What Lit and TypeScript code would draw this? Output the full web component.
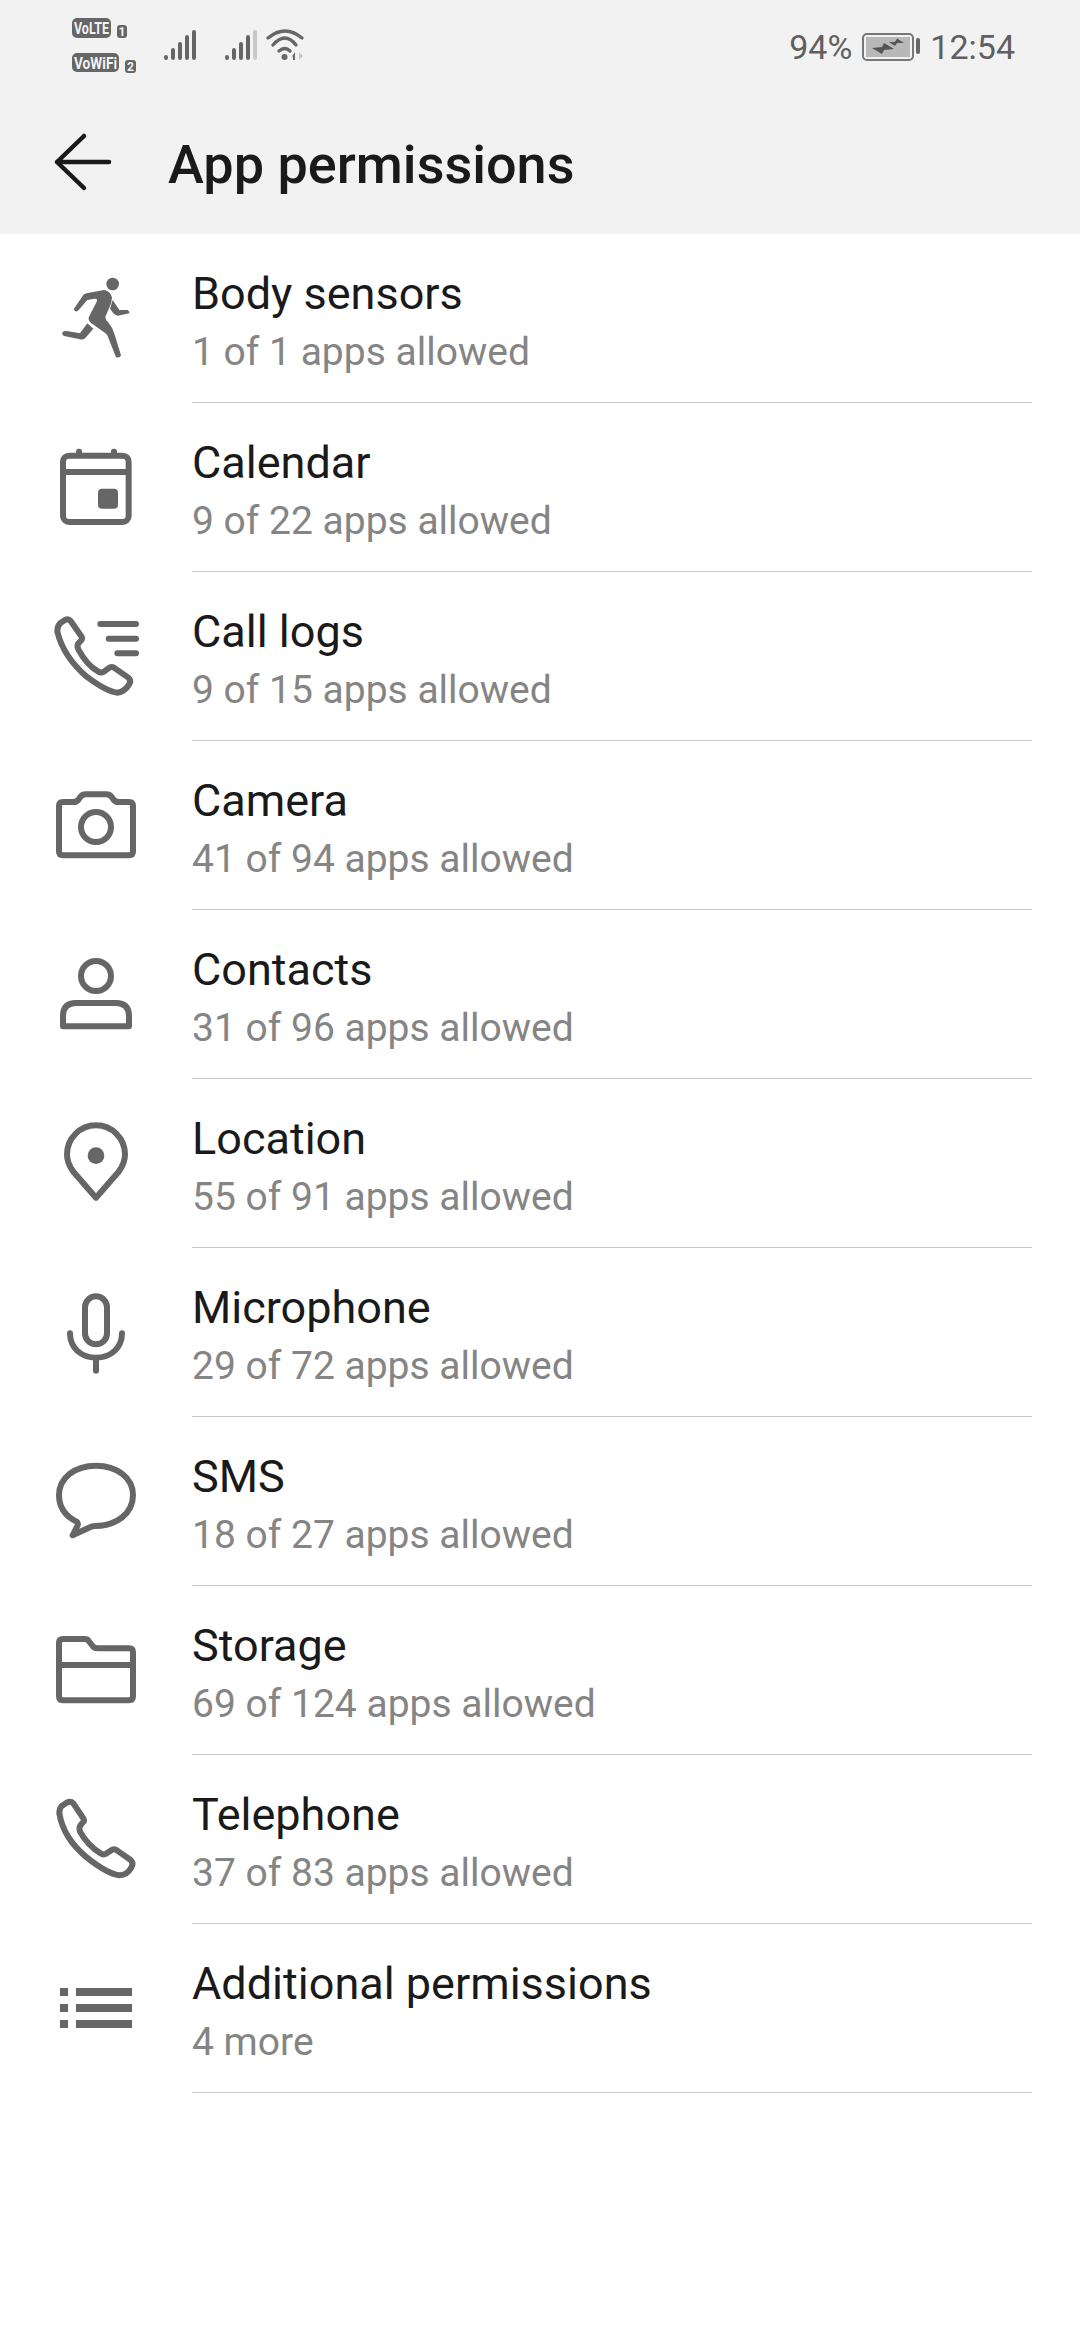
import { LitElement, html, css, svg } from "lit";
import { customElement } from "lit/decorators.js";

const S = "fill:none;stroke:#666;stroke-width:18;stroke-linejoin:round;stroke-linecap:round";

const ICONS: Record<string, { y: number; g: unknown }> = {
  body: {
    y: -48,
    g: svg`<g fill="#666"><circle cx="248" cy="102" r="19"/>
      <path d="M131 178 L160 135 Q164 131 170 130 L222 120 Q240 122 246 142 Q246 160 236 178 L226 200 Q226 210 234 216 Q248 232 254 254 L273 316 Q270 325 258 322 L232 256 Q226 248 216 242 L182 218 Q172 208 178 198 L200 155 Q204 145 194 146 L172 150 L144 182 Q136 188 131 178 Z"/>
      <path d="M248 150 L268 180 L292 180 Q300 184 298 190 L264 197 Q256 197 250 190 L240 176 Z"/>
      <path d="M172 220 L190 236 L166 264 Q160 270 150 268 L102 258 Q94 252 98 246 Q102 242 110 243 L150 250 Z"/></g>`,
  },
  calendar: {
    y: 459,
    g: svg`<rect x="99" y="617" width="197" height="199" rx="18" style=${S}/>
      <g fill="#666"><rect x="99" y="657" width="197" height="18"/>
      <rect x="138" y="596" width="18" height="24" rx="8"/><rect x="243" y="596" width="18" height="24" rx="8"/>
      <rect x="204" y="716" width="60" height="60" rx="12"/></g>`,
  },
  calllogs: {
    y: -54,
    g: svg`<path style=${S} d="M90 100 L105 90 Q115 85 122 93 L155 140 Q158 148 152 153 L145 160 Q140 168 145 178 Q170 225 205 245 Q213 250 222 245 L238 233 Q247 228 255 235 L295 263 Q305 272 298 282 Q285 305 262 308 Q230 305 170 260 Q100 200 82 125 Q82 108 90 100 Z"/>
      <path style=${S} d="M211 102 H318 M236 146 H318 M262 190 H318"/>`,
  },
  camera: {
    y: 453,
    g: svg`<path style=${S} d="M87 648 Q87 636 99 636 H130 Q140 636 146 628 L150 622 Q156 613 168 613 H228 Q240 613 246 622 L250 628 Q256 636 266 636 H297 Q309 636 309 648 V784 Q309 796 297 796 H99 Q87 796 87 784 Z"/>
      <circle cx="198" cy="711" r="45" style=${S}/>`,
  },
  contacts: {
    y: -60,
    g: svg`<circle cx="198" cy="138" r="45" style=${S}/>
      <path style=${S} d="M99 289 V258 Q99 219 138 219 H258 Q297 219 297 258 V289 Z"/>`,
  },
  location: {
    y: -63,
    g: svg`<path style=${S} d="M198 293 L130 215 Q111 190 111 163 A87 87 0 0 1 285 163 Q285 190 266 215 Z"/>
      <circle cx="198" cy="167" r="25" fill="#666"/>`,
  },
  mic: {
    y: 444,
    g: svg`<rect x="165" y="589" width="66" height="144" rx="33" style=${S}/>
      <path style=${S} d="M120 700 C120 745 155 773 198 773 C241 773 276 745 276 700 M198 773 V812"/>`,
  },
  sms: {
    y: -69,
    g: svg`<path style=${S} d="M198 77 C135 77 87 113 87 165 C87 200 105 228 140 245 Q146 250 142 258 L128 286 L180 262 Q186 258 195 258 C260 258 309 220 309 165 C309 113 260 77 198 77 Z"/>`,
  },
  storage: {
    y: -102,
    g: svg`<path style=${S} d="M87 69 Q87 57 99 57 H165 Q172 57 176 63 L188 78 Q193 85 202 85 H297 Q309 85 309 97 V229 Q309 241 297 241 H99 Q87 241 87 229 Z"/>
      <rect x="87" y="126" width="222" height="18" fill="#666"/>`,
  },
  phone: {
    y: -45,
    g: svg`<path style=${S} d="M95 108 L110 98 Q122 92 130 100 L160 145 Q165 153 158 158 L152 165 Q146 172 150 185 Q175 228 212 250 Q220 256 230 250 L245 240 Q254 235 262 242 L302 270 Q312 280 304 292 Q292 315 268 316 Q230 310 170 262 Q100 205 88 130 Q88 115 95 108 Z"/>`,
  },
  more: {
    y: 462,
    g: svg`<g fill="#666"><rect x="90" y="654" width="24" height="24"/><rect x="138" y="654" width="168" height="24"/>
      <rect x="90" y="702" width="24" height="24"/><rect x="138" y="702" width="168" height="24"/>
      <rect x="90" y="750" width="24" height="24"/><rect x="138" y="750" width="168" height="24"/></g>`,
  },
};

const ROWS = [
  ["body", "Body sensors", "1 of 1 apps allowed"],
  ["calendar", "Calendar", "9 of 22 apps allowed"],
  ["calllogs", "Call logs", "9 of 15 apps allowed"],
  ["camera", "Camera", "41 of 94 apps allowed"],
  ["contacts", "Contacts", "31 of 96 apps allowed"],
  ["location", "Location", "55 of 91 apps allowed"],
  ["mic", "Microphone", "29 of 72 apps allowed"],
  ["sms", "SMS", "18 of 27 apps allowed"],
  ["storage", "Storage", "69 of 124 apps allowed"],
  ["phone", "Telephone", "37 of 83 apps allowed"],
  ["more", "Additional permissions", "4 more"],
];

@customElement("app-root")
export class AppRoot extends LitElement {
  static styles = css`
    :host { display: block; width: 1080px; height: 2340px; background: #fff; font-family: Roboto, "Noto Sans", sans-serif; overflow: hidden; }
    .head { background: #f2f2f2; height: 234px; display: flex; flex-direction: column; }
    .status { height: 94px; display: flex; align-items: center; justify-content: space-between; padding: 0 65px 0 70px; }
    .status-right { display: flex; align-items: center; gap: 10px; font-size: 34px; color: #5f5f5f; }
    .title { flex: 1; display: flex; align-items: center; padding-left: 52px; padding-bottom: 4px; gap: 56px; }
    .title h1 { margin: 6px 0 0; font-size: 54px; font-weight: 500; color: #1a1a1a; line-height: 1; }
    .list { padding-right: 48px; }
    .row { display: flex; height: 169px; }
    .icon { width: 192px; flex: none; padding-left: 30px; box-sizing: border-box; }
    .body { flex: 1; border-bottom: 1px solid #c8c8c8; display: flex; flex-direction: column; gap: 10px; padding-top: 35px; box-sizing: border-box; }
    .name { font-size: 45px; line-height: 50px; color: #1a1a1a; }
    .sub { font-size: 39px; line-height: 46px; color: #858585; }
    svg { display: block; }
    .badge { font-family: Roboto, sans-serif; font-weight: 700; fill: #f2f2f2; text-anchor: middle; }
    .b-large { font-size: 17px; }
    .b-small { font-size: 12px; }
  `;

  render() {
    return html`
      <div class="head">
        <div class="status">
          <svg width="240" height="94" viewBox="70 0 240 94">
            <g fill="#666">
              <rect x="72" y="18" width="39" height="20" rx="5"/>
              <rect x="117" y="25" width="10" height="13" rx="3"/>
              <rect x="72" y="53" width="47" height="19" rx="5"/>
              <rect x="125" y="60" width="11" height="13" rx="3"/>
            </g>
            <text class="badge b-large" x="91.5" y="34" textLength="35" lengthAdjust="spacingAndGlyphs">VoLTE</text>
            <text class="badge b-small" x="122" y="36">1</text>
            <text class="badge b-large" x="95.5" y="68.5" textLength="43" lengthAdjust="spacingAndGlyphs">VoWiFi</text>
            <text class="badge b-small" x="130.5" y="71">2</text>
            <g stroke="#666" stroke-width="4" stroke-linecap="round" fill="none">
              <path d="M166 57 v1M173 50 v8M180 44 v14M187 37 v21M194 32 v26"/>
              <path d="M227 57 v1M234 50 v8M241 44 v14M248 37 v21"/>
              <path d="M255 32 v26" stroke="#c8c8c8"/>
              <path d="M268 38 Q285 24 302 38M273 45 Q285 31 296 45M279 51 Q285 46 290 51" stroke-width="3.4"/>
            </g>
            <circle cx="284.5" cy="57" r="3" fill="#666"/>
            <path d="M295 52 V60 H293 V56 L291 58 Z" fill="#666"/>
            <path d="M299 52 L303 56 L299 60 Z" fill="#c8c8c8"/>
          </svg>
          <div class="status-right">
            <span>94%</span>
            <svg width="58" height="28" viewBox="0 0 58 28">
              <rect x="1" y="1" width="50" height="26" rx="4" fill="none" stroke="#777" stroke-width="2"/>
              <rect x="4" y="4" width="44" height="20" fill="#b8b8b8"/>
              <path d="M10 15 L20 14 L22 10 L32 16 L22 17 L20 21 Z M27 9 L33 9 L35 5.5 L42 10 L35 10 L33 13 Z" fill="#555"/>
              <rect x="54" y="5" width="4" height="16" rx="2" fill="#666"/>
            </svg>
            <span>12:54</span>
          </div>
        </div>
        <div class="title">
          <svg width="60" height="60" viewBox="0 0 60 60"><path d="M57 30 H5 M32 4 L5 30 L32 56" fill="none" stroke="#1a1a1a" stroke-width="4.5" stroke-linecap="round" stroke-linejoin="round"/></svg>
          <h1>App permissions</h1>
        </div>
      </div>
      <div class="list">
        ${ROWS.map(([k, n, s]) => {
          const ic = ICONS[k];
          return html`<div class="row">
            <div class="icon"><svg width="130" height="169" viewBox="0 ${ic.y} 390 507">${ic.g}</svg></div>
            <div class="body"><div class="name">${n}</div><div class="sub">${s}</div></div>
          </div>`;
        })}
      </div>
    `;
  }
}
